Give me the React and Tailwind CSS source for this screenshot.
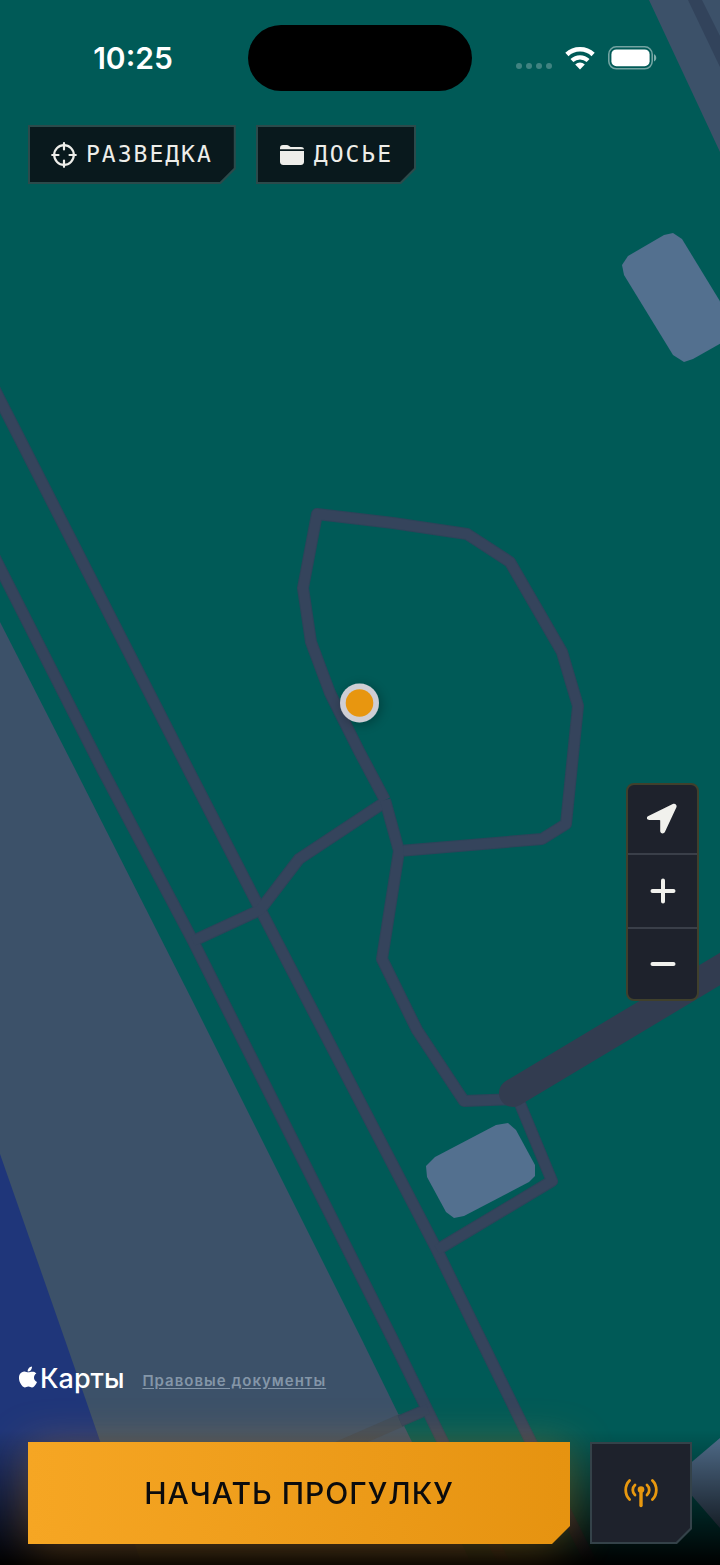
import { useState } from "react";
import { IoLogoApple } from "react-icons/io5";

/* ---------- Map Data ---------- */
const paths = [
  "-10,380 0,400 188,769 260,909 437,1250 481,1340 531,1442 592,1565",
  "-10,548 0,568 102,769 193,941 393,1340 443,1442 505,1565",
  "193,941 260,910 299,859 385,802",
  "385,800 359,751 330,693 311,642 303,588 317,514 393,523 467,534 510,562 562,652 578,706 566,824 542,839 399,851",
  "385,800 399,851 382,959 417,1030 464,1101 518,1099 552,1181 437,1250",
  "428,1409 400,1421",
];

function MapCanvas() {
  return (
    <svg
      className="absolute inset-0 h-full w-full"
      viewBox="0 0 720 1565"
      preserveAspectRatio="xMidYMid slice"
      aria-hidden="true"
    >
      <defs>
        <filter id="pinShadow" x="-50%" y="-50%" width="200%" height="200%">
          <feDropShadow dx="2" dy="2" stdDeviation="6" floodColor="#000" floodOpacity="0.3" />
        </filter>
      </defs>
      <rect width="720" height="1565" fill="#005a57" />

      {/* streets and water */}
      <polygon points="0,622 75,769 192,1000 362,1340 412,1442 472,1565 0,1565" fill="#3c5169" />
      <polygon points="0,1154 65,1340 100,1441 142,1565 0,1565" fill="#1f367a" />
      <polygon points="649,0 720,0 720,152" fill="#3c5169" />
      <polygon points="688,0 702,0 720,36 720,67" fill="#32435b" />
      <polyline points="402,1420 340,1447 290,1470" fill="none" stroke="#3c4b5c" strokeWidth="13" />

      {/* footpaths */}
      <g fill="none" stroke="#2c4459" strokeWidth="12" strokeLinejoin="round" strokeLinecap="butt">
        {paths.map((p) => <polyline key={p} points={p} />)}
      </g>
      <g fill="none" stroke="#35445c" strokeWidth="10" strokeLinejoin="round" strokeLinecap="butt">
        {paths.map((p) => <polyline key={p} points={p} />)}
      </g>
      <path d="M513 1093 730 963" stroke="#323c50" strokeWidth="28" strokeLinecap="round" />

      {/* buildings */}
      <g fill="#53708f">
        <polygon points="426,1166 435,1157 496,1125 508,1123 516,1130 535,1165 535,1176 529,1182 464,1216 454,1218 446,1212 427,1177" />
        <polygon points="622,265 628,256 664,235 673,233 682,239 732,321 732,337 693,359 684,362 673,355 624,275" />
        <polygon points="720,1438 680,1472 680,1482 720,1528" />
      </g>

      {/* user position */}
      <circle cx="359.500" cy="703" r="19.500" fill="#cfced4" filter="url(#pinShadow)" />
      <circle cx="359.500" cy="703" r="13.800" fill="#e8960f" />
    </svg>
  );
}

/* ---------- Icons ---------- */
function CrosshairIcon() {
  return (
    <svg className="h-[26px] w-[26px]" viewBox="0 0 26 26" fill="none" stroke="currentColor" strokeWidth="2.200" strokeLinecap="round">
      <circle cx="13" cy="13" r="9.800" />
      <path d="M13 1.200v6.300M13 18.500v6.300M1.200 13h6.300M18.500 13h6.300" />
    </svg>
  );
}

function FolderIcon() {
  return (
    <svg className="h-[26px] w-[26px]" viewBox="0 0 26 26" fill="currentColor">
      <path d="M1 7.200V6.200C1 4.200 2 3 4 3h3.800c1 0 1.600.3 2.300.9l.8.6c.5.4.9.5 1.600.5H22c1.800 0 2.800.8 3 2.200z" />
      <path d="M1 9h24v10.500c0 2.300-1 3.500-3.300 3.500H4.300C2 23 1 21.800 1 19.500z" />
    </svg>
  );
}

function ArrowIcon() {
  return (
    <svg className="h-8 w-8" viewBox="0 0 32 32" fill="currentColor">
      <path d="M1.400 13 25.800 1.100c2.400-1.100 4.600 1 3.500 3.500L18 28.800c-1.200 2.500-4.800 1.900-4.800-.9V17.600c0-.5-.2-.7-.7-.7H2.300c-2.900 0-3.400-2.700-.9-3.900z" />
    </svg>
  );
}

function PlusIcon() {
  return (
    <svg className="h-8 w-8" viewBox="0 0 32 32" stroke="currentColor" strokeWidth="4" strokeLinecap="round">
      <path d="M16 5.500v21M5.500 16h21" />
    </svg>
  );
}

function MinusIcon() {
  return (
    <svg className="h-8 w-8" viewBox="0 0 32 32" stroke="currentColor" strokeWidth="4" strokeLinecap="round">
      <path d="M5.500 16h21" />
    </svg>
  );
}

function AntennaIcon() {
  return (
    <svg className="h-[34px] w-[34px]" viewBox="0 0 34 34" fill="none" stroke="currentColor" strokeWidth="2.800" strokeLinecap="round">
      <path d="M5.600 4.500C.4 9.500.4 18.500 5.600 23.500M28.400 4.500c5.200 5 5.200 14 0 19" />
      <path d="M11 9c-3 2.800-3 7.200 0 10M23 9c3 2.800 3 7.200 0 10" />
      <path d="M17 15v14.500" strokeWidth="3.400" />
      <circle cx="17" cy="13.500" r="3.300" fill="currentColor" stroke="none" />
    </svg>
  );
}

function WifiIcon() {
  return (
    <svg className="h-[24px] w-[30px]" viewBox="0 0 30 24" fill="none" stroke="#fff" strokeWidth="4.600">
      <path d="M1.900 8.500C9 1.500 21 1.500 28.100 8.500" />
      <path d="M6.900 14.500c4.600-4.300 11.600-4.300 16.200 0" strokeWidth="4.200" />
      <path d="M15 23.500 10.200 18.600c2.800-2.800 6.800-2.800 9.600 0z" fill="#fff" stroke="none" />
    </svg>
  );
}

function BatteryIcon() {
  return (
    <svg className="h-[24px] w-[49px]" viewBox="0 0 49 24">
      <rect x="0.800" y="0.800" width="43.400" height="22" rx="7.500" fill="none" stroke="#fff" strokeOpacity="0.450" strokeWidth="1.600" />
      <rect x="3.400" y="3.400" width="38.200" height="16.800" rx="5" fill="#fff" />
      <path d="M46 8.200c3 1.200 3 6 0 7.200z" fill="#fff" fillOpacity="0.500" />
    </svg>
  );
}

/* ---------- Buttons ---------- */
function Chip({ icon, children }) {
  return (
    <button className="h-[59px] bg-[#2b4a4b] p-[2px] [clip-path:polygon(0_0,100%_0,100%_calc(100%-15px),calc(100%-15px)_100%,0_100%)]">
      <span className="flex h-full items-center gap-[9px] bg-[#09191d] px-[21px] font-['DejaVu_Sans_Mono',monospace] text-[23px] tracking-[2px] text-[#eeeeea] [clip-path:polygon(0_0,100%_0,100%_calc(100%-14px),calc(100%-14px)_100%,0_100%)]">
        {icon}
        <span>{children}</span>
      </span>
    </button>
  );
}

export default function App() {
  const [walking, setWalking] = useState(false);

  return (
    <div className="relative flex min-h-screen flex-col overflow-hidden font-[Inter,sans-serif]">
      <MapCanvas />

      {/* Status bar */}
      <div className="relative grid grid-cols-[1fr_224px_1fr] items-center pt-[25px] text-white">
        <span className="pl-[18px] text-center text-[30px] leading-[66px] font-semibold">10:25</span>
        <div className="h-[66px] rounded-full bg-black" />
        <div className="flex items-center justify-center gap-[13px] pr-5">
          <div className="flex gap-1 pt-4">
            <i className="h-[6px] w-[6px] rounded-full bg-white/25" />
            <i className="h-[6px] w-[6px] rounded-full bg-white/25" />
            <i className="h-[6px] w-[6px] rounded-full bg-white/25" />
            <i className="h-[6px] w-[6px] rounded-full bg-white/25" />
          </div>
          <WifiIcon />
          <BatteryIcon />
        </div>
      </div>

      {/* Top actions */}
      <nav className="relative flex gap-5 px-7 pt-[34px]">
        <Chip icon={<CrosshairIcon />}>РАЗВЕДКА</Chip>
        <Chip icon={<FolderIcon />}>ДОСЬЕ</Chip>
      </nav>

      {/* Map controls */}
      <div className="relative mt-auto mr-[21px] mb-[360px] flex w-[73px] flex-col divide-y-2 divide-[#3a3f49] self-end overflow-hidden rounded-lg border-2 border-[#40402c] bg-[#1e222c] text-[#f1f1ed]">
        <button aria-label="Моё местоположение" className="flex h-[70px] items-center justify-center">
          <ArrowIcon />
        </button>
        <button aria-label="Приблизить" className="flex h-[74px] items-center justify-center">
          <PlusIcon />
        </button>
        <button aria-label="Отдалить" className="flex h-[70px] items-center justify-center">
          <MinusIcon />
        </button>
      </div>

      {/* Attribution */}
      <div className="relative flex items-center gap-[18px] px-4 pb-[29px]">
        <span className="flex items-center text-[27px] leading-9 font-medium text-white">
          <IoLogoApple className="mb-1 h-6 w-6" />
          Карты
        </span>
        <a href="#legal" className="pt-1 text-[15px] font-semibold tracking-[1px] text-[#8496a8] underline underline-offset-2">
          Правовые документы
        </a>
      </div>

      {/* Bottom bar */}
      <div className="relative -mt-5 flex gap-5 bg-linear-to-b from-transparent from-15% to-black px-7 pt-[36px] pb-[21px]">
        <div className="flex-1 drop-shadow-[0_4px_22px_rgba(245,150,20,0.33)]">
          <button
            onClick={() => setWalking(!walking)}
            aria-pressed={walking}
            className="h-[102px] w-full bg-linear-to-r from-[#f6a623] to-[#e69310] text-[30px] font-medium tracking-[1px] text-[#0b0b0d] [clip-path:polygon(0_0,100%_0,100%_calc(100%-18px),calc(100%-18px)_100%,0_100%)]"
          >
            НАЧАТЬ ПРОГУЛКУ
          </button>
        </div>
        <button
          aria-label="Маяк"
          className="h-[102px] w-[102px] bg-[#344249] p-[2px] [clip-path:polygon(0_0,100%_0,100%_calc(100%-15px),calc(100%-15px)_100%,0_100%)]"
        >
          <span className="flex h-full items-center justify-center bg-[#1e222c] text-[#e8980f] [clip-path:polygon(0_0,100%_0,100%_calc(100%-14px),calc(100%-14px)_100%,0_100%)]">
            <AntennaIcon />
          </span>
        </button>
      </div>
    </div>
  );
}
